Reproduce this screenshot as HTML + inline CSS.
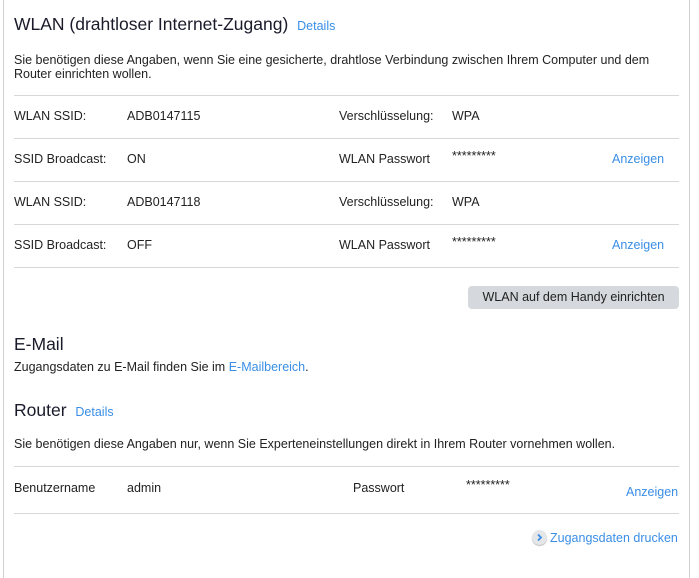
<!DOCTYPE html>
<html><head><meta charset="utf-8"><style>
body{margin:0;width:699px;height:570px;background:#fff;font-family:"Liberation Sans",sans-serif;color:#222;position:relative;overflow:hidden}
.frame{position:absolute;left:3px;top:-2px;width:685px;height:580px;border-left:1px solid #d0d0d0;border-right:1px solid #d0d0d0}
.t{position:absolute;font-size:12.5px;white-space:nowrap;line-height:16px}
.h{position:absolute;font-size:17.5px;color:#1a1a2a;white-space:nowrap;line-height:20px}
.a{color:#3a8ee6}
.l{position:absolute;left:14px;width:665px;height:1px;background:#d8d8d8}
.btn{position:absolute;left:468px;top:286px;width:211px;height:23px;background:#d5d8dc;border-radius:4px;font-size:12.5px;text-align:center;line-height:23px;color:#222}
.ic{position:absolute;left:532px;top:530px;width:15px;height:15px;border-radius:50%;background:#e4e6e8;box-shadow:0 1px 1px #bbb}
</style></head><body>
<div class="frame"></div>
<div class="h" style="left:14px;top:14px">WLAN (drahtloser Internet-Zugang) <span class="a" style="font-size:12.5px;margin-left:4px">Details</span></div>
<div class="t" style="left:14px;top:53px;line-height:14px">Sie benötigen diese Angaben, wenn Sie eine gesicherte, drahtlose Verbindung zwischen Ihrem Computer und dem<br>Router einrichten wollen.</div>
<div class="l" style="top:95px"></div>
<div class="t" style="left:14px;top:108px">WLAN SSID:</div><div class="t" style="left:127px;top:108px">ADB0147115</div><div class="t" style="left:339px;top:108px">Verschlüsselung:</div><div class="t" style="left:452px;top:108px">WPA</div>
<div class="l" style="top:138px"></div>
<div class="t" style="left:14px;top:151px">SSID Broadcast:</div><div class="t" style="left:127px;top:151px">ON</div><div class="t" style="left:339px;top:151px">WLAN Passwort</div><div class="t" style="left:452px;top:148px">*********</div><div class="t a" style="left:612px;top:151px">Anzeigen</div>
<div class="l" style="top:181px"></div>
<div class="t" style="left:14px;top:194px">WLAN SSID:</div><div class="t" style="left:127px;top:194px">ADB0147118</div><div class="t" style="left:339px;top:194px">Verschlüsselung:</div><div class="t" style="left:452px;top:194px">WPA</div>
<div class="l" style="top:224px"></div>
<div class="t" style="left:14px;top:237px">SSID Broadcast:</div><div class="t" style="left:127px;top:237px">OFF</div><div class="t" style="left:339px;top:237px">WLAN Passwort</div><div class="t" style="left:452px;top:234px">*********</div><div class="t a" style="left:612px;top:237px">Anzeigen</div>
<div class="l" style="top:267px"></div>
<div class="btn">WLAN auf dem Handy einrichten</div>
<div class="h" style="left:14px;top:334px">E-Mail</div>
<div class="t" style="left:14px;top:359px">Zugangsdaten zu E-Mail finden Sie im <span class="a">E-Mailbereich</span>.</div>
<div class="h" style="left:14px;top:400px">Router <span class="a" style="font-size:12.5px;margin-left:4px">Details</span></div>
<div class="t" style="left:14px;top:436px">Sie benötigen diese Angaben nur, wenn Sie Experteneinstellungen direkt in Ihrem Router vornehmen wollen.</div>
<div class="l" style="top:466px"></div>
<div class="t" style="left:14px;top:480px">Benutzername</div><div class="t" style="left:127px;top:480px">admin</div><div class="t" style="left:353px;top:480px">Passwort</div><div class="t" style="left:466px;top:477px">*********</div><div class="t a" style="left:626px;top:484px">Anzeigen</div>
<div class="l" style="top:513px"></div>
<div class="ic"><svg width="15" height="15" viewBox="0 0 15 15"><path d="M6 4.5 L9 7.5 L6 10.5" fill="none" stroke="#3a8ee6" stroke-width="1.8"/></svg></div>
<div class="t a" style="left:550px;top:530px">Zugangsdaten drucken</div>
</body></html>
